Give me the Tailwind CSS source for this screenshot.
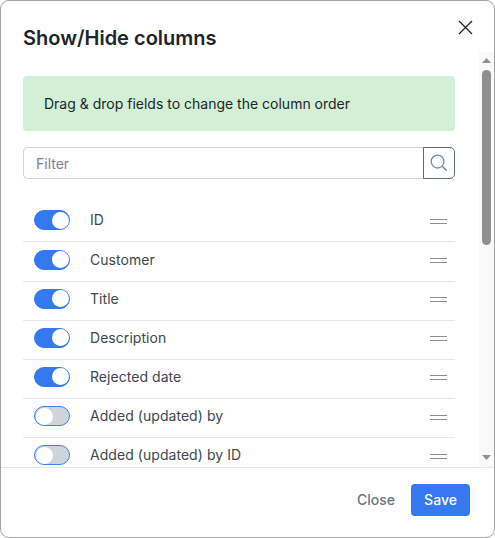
<!DOCTYPE html>
<html><head><meta charset="utf-8"><script src="https://cdn.jsdelivr.net/npm/@tailwindcss/browser@4"></script></head>
<body class="bg-white">
<div class="w-[495px] h-[538px] relative flex flex-col bg-white border border-[#a3a3a3] rounded-[9px] overflow-hidden font-['Inter',sans-serif] text-[#212529]">
  <div class="h-[51px] shrink-0 flex items-start justify-between pl-[22px] pr-[21px]">
    <h1 class="text-[20px] leading-[24px] font-semibold mt-[25px]">Show/Hide columns</h1>
    <svg class="mt-[19px]" width="15" height="15" viewBox="0 0 15 15" fill="none" stroke="#212529" stroke-width="1.3"><path d="M1 1l13 13M14 1L1 14"/></svg>
  </div>
  <div class="relative h-[415px] shrink-0 overflow-hidden pl-[22px] pr-[39px] pt-[24px]">
    <div class="h-[55px] bg-[#d3efd6] rounded-[4px] flex items-center pl-[21px] text-[14px]">Drag &amp; drop fields to change the column order</div>
    <div class="flex h-[32px] mt-[16px]">
      <div class="flex-1 border border-[#ced4da] border-r-0 rounded-l-[5px] flex items-center pl-[12px] text-[14px] text-[#7b8389]">Filter</div>
      <div class="w-[32px] border border-[#5f6b75] rounded-r-[5px] flex items-center justify-center">
        <svg width="18" height="18" viewBox="0 0 18 18" fill="none"><circle cx="7.6" cy="7.6" r="6.4" stroke="#6a8fb5" stroke-width="1.3"/><path d="M12.3 12.3l4.4 4.4" stroke="#7c7f80" stroke-width="1.4"/></svg>
      </div>
    </div>
    <div class="mt-[24.3px] text-[#40474e]">
      <div class="h-[39.15px] border-b border-[#e5e7eb] flex items-center pl-[11px] pr-[8px] pb-[4px] text-[14px] tracking-[0.05px]">
        <span class="w-[36px] h-[20px] rounded-full bg-[#3578f0] border border-[#3578f0] flex items-center justify-end pr-[0.5px]"><span class="w-[17px] h-[17px] rounded-full bg-white"></span></span>
        <span class="ml-[20px] flex-1 -mt-[1px]">ID</span><span class="w-[17px] h-[5px] mt-[2px] border-y border-[#8a8f94]"></span>
      </div>
      <div class="h-[39.15px] border-b border-[#e5e7eb] flex items-center pl-[11px] pr-[8px] pb-[4px] text-[14px] tracking-[0.05px]">
        <span class="w-[36px] h-[20px] rounded-full bg-[#3578f0] border border-[#3578f0] flex items-center justify-end pr-[0.5px]"><span class="w-[17px] h-[17px] rounded-full bg-white"></span></span>
        <span class="ml-[20px] flex-1 -mt-[1px]">Customer</span><span class="w-[17px] h-[5px] mt-[2px] border-y border-[#8a8f94]"></span>
      </div>
      <div class="h-[39.15px] border-b border-[#e5e7eb] flex items-center pl-[11px] pr-[8px] pb-[4px] text-[14px] tracking-[0.05px]">
        <span class="w-[36px] h-[20px] rounded-full bg-[#3578f0] border border-[#3578f0] flex items-center justify-end pr-[0.5px]"><span class="w-[17px] h-[17px] rounded-full bg-white"></span></span>
        <span class="ml-[20px] flex-1 -mt-[1px]">Title</span><span class="w-[17px] h-[5px] mt-[2px] border-y border-[#8a8f94]"></span>
      </div>
      <div class="h-[39.15px] border-b border-[#e5e7eb] flex items-center pl-[11px] pr-[8px] pb-[4px] text-[14px] tracking-[0.05px]">
        <span class="w-[36px] h-[20px] rounded-full bg-[#3578f0] border border-[#3578f0] flex items-center justify-end pr-[0.5px]"><span class="w-[17px] h-[17px] rounded-full bg-white"></span></span>
        <span class="ml-[20px] flex-1 -mt-[1px]">Description</span><span class="w-[17px] h-[5px] mt-[2px] border-y border-[#8a8f94]"></span>
      </div>
      <div class="h-[39.15px] border-b border-[#e5e7eb] flex items-center pl-[11px] pr-[8px] pb-[4px] text-[14px] tracking-[0.05px]">
        <span class="w-[36px] h-[20px] rounded-full bg-[#3578f0] border border-[#3578f0] flex items-center justify-end pr-[0.5px]"><span class="w-[17px] h-[17px] rounded-full bg-white"></span></span>
        <span class="ml-[20px] flex-1 -mt-[1px]">Rejected date</span><span class="w-[17px] h-[5px] mt-[2px] border-y border-[#8a8f94]"></span>
      </div>
      <div class="h-[39.15px] border-b border-[#e5e7eb] flex items-center pl-[11px] pr-[8px] pb-[4px] text-[14px] tracking-[0.05px]">
        <span class="w-[36px] h-[20px] rounded-full bg-[#ced4da] border border-[#3f80ee] flex items-center pl-[0.5px]"><span class="w-[17px] h-[17px] rounded-full bg-white"></span></span>
        <span class="ml-[20px] flex-1 -mt-[1px]">Added (updated) by</span><span class="w-[17px] h-[5px] mt-[2px] border-y border-[#8a8f94]"></span>
      </div>
      <div class="h-[39.15px] border-b border-[#e5e7eb] flex items-center pl-[11px] pr-[8px] pb-[4px] text-[14px] tracking-[0.05px]">
        <span class="w-[36px] h-[20px] rounded-full bg-[#ced4da] border border-[#3f80ee] flex items-center pl-[0.5px]"><span class="w-[17px] h-[17px] rounded-full bg-white"></span></span>
        <span class="ml-[20px] flex-1 -mt-[1px]">Added (updated) by ID</span><span class="w-[17px] h-[5px] mt-[2px] border-y border-[#8a8f94]"></span>
      </div>
    </div>
    <div class="absolute right-0 top-0 bottom-0 w-[15px] bg-[#f9f9f9]">
      <svg class="absolute left-[3px] top-[6px]" width="9" height="5" viewBox="0 0 9 5"><path d="M4.5 0l4.5 5H0z" fill="#8f8f8f"/></svg>
      <div class="absolute left-[3px] top-[18px] w-[9px] h-[175px] rounded-full bg-[#8f8f8f]"></div>
      <svg class="absolute left-[3px] bottom-[7px]" width="9" height="5" viewBox="0 0 9 5"><path d="M4.5 5l4.5-5H0z" fill="#8f8f8f"/></svg>
    </div>
  </div>
  <div class="flex-1 border-t border-[#e5e7eb] flex items-center justify-end pr-[24px] gap-[16px] pb-[5px]">
    <span class="text-[14px] font-medium text-[#6c757d] -mt-[1px]">Close</span>
    <span class="w-[59px] h-[32px] pb-[2px] bg-[#3578f0] rounded-[4px] text-white text-[14px] font-medium flex items-center justify-center">Save</span>
  </div>
</div>
</body></html>
